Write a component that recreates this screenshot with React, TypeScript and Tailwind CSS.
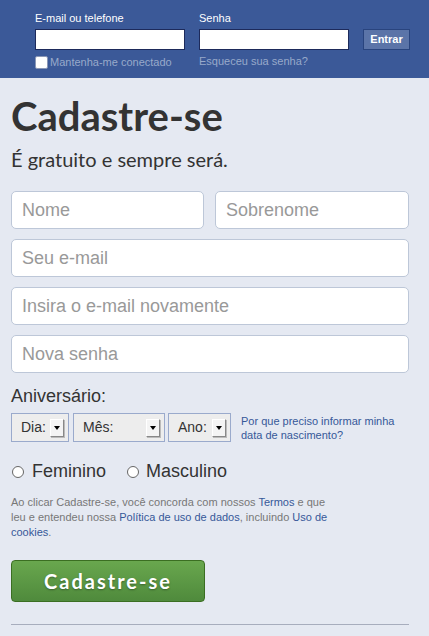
import { ReactNode } from 'react';

const arial = { fontFamily: '"Liberation Sans", Arial, sans-serif' };
const lato = { fontFamily: 'Lato, "Noto Sans", sans-serif' };

function Arrow() {
    return (
        <span className="flex h-[18px] w-[14px] items-center justify-center border-b border-r border-b-[#888] border-r-[#888] border-l border-t border-l-white border-t-white bg-[#f4f4f4] shadow-[1px_1px_0_#bbb]">
            <span className="h-0 w-0 border-x-[3px] border-t-[4px] border-x-transparent border-t-black" />
        </span>
    );
}

function FakeSelect({ label, width, gap }: { label: string; width: string; gap: string }) {
    return (
        <div className={`flex h-[29px] items-center border border-[#9aaacc] bg-[#ededed] pl-[9px] pr-[4px] ${width} ${gap}`}>
            <span className="flex-1 text-[14px] text-[#333]">{label}</span>
            <Arrow />
        </div>
    );
}

function Field({ placeholder, className = '' }: { placeholder: string; className?: string }) {
    return (
        <div className={`flex h-[38px] items-center rounded-[5px] border border-[#bdc7d8] bg-white px-[10px] ${className}`}>
            <span className="text-[18px] text-[#999]">{placeholder}</span>
        </div>
    );
}

function Link({ children }: { children: ReactNode }) {
    return <span className="text-[#365899]">{children}</span>;
}

export default function App() {
    return (
        <div className="min-h-screen bg-[#e5e9f2]" style={arial}>
            {/* barra de login */}
            <div className="h-[78px] border-b border-[#3b5a99] bg-[#3b5998] pl-[35px] pt-[11px]">
                <div className="flex items-start">
                    <div className="w-[164px]">
                        <p className="text-[11px] leading-[14px] text-white">E-mail ou telefone</p>
                        <div className="mt-[4px] h-[21px] w-[150px] border border-[#1d2a5b] bg-white" />
                        <div className="mt-[4px] flex items-center">
                            <span className="h-[13px] w-[13px] rounded-[2px] border border-[#8a97b6] bg-white" />
                            <span className="ml-[2px] text-[11px] text-[#98a9ca]">Mantenha-me conectado</span>
                        </div>
                    </div>
                    <div className="w-[164px]">
                        <p className="text-[11px] leading-[14px] text-white">Senha</p>
                        <div className="mt-[4px] h-[21px] w-[150px] border border-[#1d2a5b] bg-white" />
                        <p className="mt-[4px] text-[11px] leading-[14px] text-[#98a9ca]">Esqueceu sua senha?</p>
                    </div>
                    <div className="mt-[18px] flex h-[21px] w-[47px] items-center justify-center border border-[#29447e] bg-[#5b74a8] text-[11px] font-bold text-white">
                        Entrar
                    </div>
                </div>
            </div>

            <div className="w-[409px] pl-[11px]">
                <h1 className="mt-[14px] text-[40px] font-bold leading-[48px] text-[#333]" style={lato}>
                    Cadastre-se
                </h1>
                <p className="mt-[6px] text-[20px] leading-[26px] text-[#333]" style={lato}>
                    É gratuito e sempre será.
                </p>

                <div className="mt-[19px] flex flex-col gap-[10px]">
                    <div className="flex gap-[11px]">
                        <Field placeholder="Nome" className="w-[193px]" />
                        <Field placeholder="Sobrenome" className="w-[194px]" />
                    </div>
                    <Field placeholder="Seu e-mail" />
                    <Field placeholder="Insira o e-mail novamente" />
                    <Field placeholder="Nova senha" />
                </div>

                <p className="mt-[12px] text-[18px] leading-[22px] text-[#333]">Aniversário:</p>
                <div className="mt-[6px] flex items-center">
                    <FakeSelect label="Dia:" width="w-[58px]" gap="mr-[4px]" />
                    <FakeSelect label="Mês:" width="w-[92px]" gap="mr-[3px]" />
                    <FakeSelect label="Ano:" width="w-[63px]" gap="mr-[10px]" />
                    <p className="text-[11px] leading-[14px] text-[#365899]">
                        Por que preciso informar minha
                        <br />
                        data de nascimento?
                    </p>
                </div>

                <div className="mt-[16px] flex items-center text-[18px] text-[#333]">
                    <span className="ml-[1px] h-[12px] w-[12px] rounded-full border border-[#666] bg-white" />
                    <span className="ml-[8px]">Feminino</span>
                    <span className="ml-[21px] h-[12px] w-[12px] rounded-full border border-[#666] bg-white" />
                    <span className="ml-[7px]">Masculino</span>
                </div>

                <p className="mt-[10px] w-[330px] text-[11px] leading-[15px] text-[#777]">
                    Ao clicar Cadastre-se, você concorda com nossos <Link>Termos</Link> e que leu e entendeu nossa{' '}
                    <Link>Política de uso de dados</Link>, incluindo <Link>Uso de cookies</Link>.
                </p>

                <button
                    className="mt-[20px] flex h-[42px] w-[194px] items-center justify-center rounded-[4px] border border-[#3b6e22] bg-gradient-to-b from-[#69a74e] to-[#4f8a3c] text-[20px] font-bold tracking-[2px] text-white [text-shadow:0_1px_2px_rgba(0,0,0,0.35)]"
                    style={lato}>
                    Cadastre-se
                </button>

                <div className="mt-[22px] h-px bg-[#a7adbd]" />
            </div>
        </div>
    );
}
